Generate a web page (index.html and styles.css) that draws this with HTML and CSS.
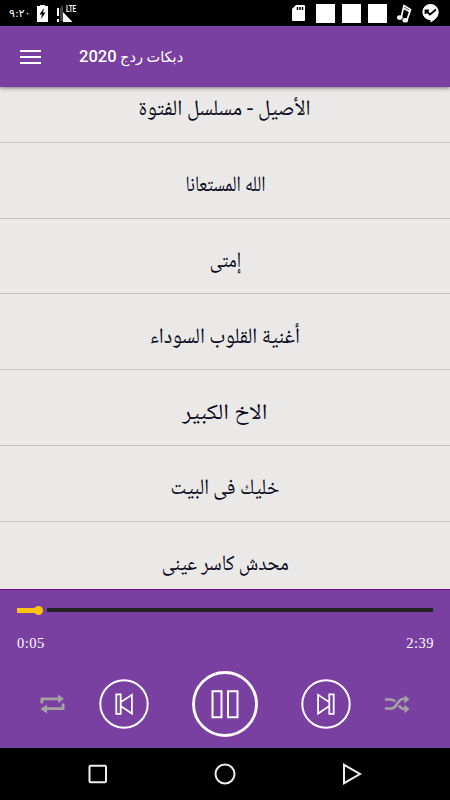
FILE: index.html
```html
<!DOCTYPE html>
<html lang="ar">
<head>
    <meta charset="UTF-8">
    <meta name="viewport" content="width=device-width, initial-scale=1.0">
    <title>دبكات ردج 2020</title>
    <link rel="stylesheet" href="styles.css">
</head>
<body>
    <div class="status-bar">
        <span class="clock" dir="ltr">٩:٢٠</span>
        <svg class="battery" width="11" height="17" viewBox="0 0 11 17"><path fill="#fff" d="M3 1V0h5v1h3v16H0V1z"/><path d="M7 3L2.500 9.500h2.500L4 14l4.500-6.500H6z"/></svg>
        <svg class="signal" width="20" height="18" viewBox="0 0 20 18"><path fill="#444" d="M3 3l3-3v16H3z"/><path fill="#fff" d="M6 7l9.500 10H6zM0 3h2v8H0zM0 14h2v3H0z"/></svg>
        <span class="lte">LTE</span>
        <div class="notifications">
            <svg width="13" height="16" viewBox="0 0 13 16"><path fill="#fff" d="M4 0h8q1 0 1 1v14q0 1-1 1H1q-1 0-1-1V4z"/><path stroke="#000" stroke-width="1.500" d="M5.500 2v3M8 2v3M10.500 2v3"/></svg>
            <i class="box"></i>
            <i class="box"></i>
            <i class="box"></i>
            <svg class="note" width="15" height="19" viewBox="0 0 15 19"><path fill="none" stroke="#fff" stroke-width="1.700" d="M4 14L7 1.500l6.500 4L10 16M6.500 4l6 3.500"/><ellipse cx="2.800" cy="13.500" rx="2.800" ry="2.300" fill="#fff"/><ellipse cx="8.300" cy="16.300" rx="2.800" ry="2.300" fill="#fff"/></svg>
            <svg class="check" width="17" height="19" viewBox="0 0 17 19"><path fill="#fff" d="M8.500 0a8.200 8 0 0 1 8.200 8.200c0 4-3.500 8-8.200 10.300v-2.300A8.100 8.100 0 0 1 8.500 0z"/><path fill="none" stroke="#000" stroke-width="1.800" d="M3.500 6.500l4.500 4 6-5M3.500 10V6.500h3.500"/></svg>
        </div>
    </div>

    <header>
        <button class="menu"><i></i><i></i><i></i></button>
        <h1 dir="rtl">دبكات ردج <b>2020</b></h1>
    </header>

    <ul class="songs" dir="rtl">
        <li><span>الأصيل - مسلسل الفتوة</span></li>
        <li><span>الله المستعانا</span></li>
        <li><span>إمتى</span></li>
        <li><span>أغنية القلوب السوداء</span></li>
        <li><span>الاخ الكبير</span></li>
        <li><span>خليك فى البيت</span></li>
        <li><span>محدش كاسر عينى</span></li>
    </ul>

    <section class="player">
        <div class="progress">
            <div class="played"></div>
            <div class="remaining"></div>
        </div>
        <div class="times"><span>0:05</span><span>2:39</span></div>
        <div class="controls">
            <svg class="repeat" width="25" height="20" viewBox="0 0 25 20"><g fill="none" stroke="#a5a2a0" stroke-width="2.800"><path d="M1.900 9.500V4.900H19M23.100 9.500v5.200H6"/></g><path fill="#a5a2a0" d="M18 .500L24 4.800 18 9zM7 10.500L.500 15 7 19.500z"/></svg>
            <svg class="prev" width="50" height="50" viewBox="0 0 50 50"><g fill="none" stroke="#fff" stroke-width="2"><circle cx="25" cy="25" r="23.700"/><path stroke-width="1.800" d="M17.300 15.300h4.400v7.900l11.200-7.400v18.700l-11.200-7.400v7.700h-4.400zM21.700 22v6"/></g></svg>
            <svg class="pause" width="66" height="66" viewBox="0 0 66 66"><g fill="none" stroke="#fff" stroke-width="2.800"><circle cx="33" cy="33" r="31.500"/><path stroke-width="2" d="M20.500 20.200h9v26h-9zM36 20.200h9.500v26H36z"/></g></svg>
            <svg class="next" width="50" height="50" viewBox="0 0 50 50"><g fill="none" stroke="#fff" stroke-width="2"><circle cx="25" cy="25" r="23.700"/><path stroke-width="1.800" d="M32.700 15.300h-4.400v7.900l-11.200-7.400v18.700l11.200-7.400v7.700h4.400zM28.300 22v6"/></g></svg>
            <svg class="shuffle" width="25" height="20" viewBox="0 0 25 20"><g fill="none" stroke="#a5a2a0" stroke-width="2.700"><path d="M0 14.500h6.500c6 0 5-9.500 12-9.500h2M0 5.500h6c2 0 3 .500 4 2M14 11.500c1.500 2.500 3 3.500 6.500 3.500"/></g><path fill="#a5a2a0" d="M19.500 1l5 4.200-5 4.300zM19.500 10.500l5 4.500-5 4.500z"/></svg>
        </div>
    </section>

    <nav class="system-nav">
        <svg width="20" height="20" viewBox="0 0 20 20"><rect x="1.500" y="1.800" width="16.500" height="16.500" rx="1"/></svg>
        <svg width="22" height="22" viewBox="0 0 22 22"><circle cx="11" cy="11" r="9.500"/></svg>
        <svg width="20" height="22" viewBox="0 0 20 22"><path d="M2 1.800v18.400L18 11z"/></svg>
    </nav>
</body>
</html>
```
FILE: styles.css
```css
body {
    margin: 0;
    height: 800px;
    display: flex;
    flex-direction: column;
    overflow: hidden;
    background: #eae9e7;
    font-family: Roboto, "DejaVu Sans", sans-serif;
}
.status-bar {
    height: 26px;
    flex: none;
    display: flex;
    align-items: center;
    background: #000;
    color: #fff;
    padding-left: 9px;
}
.clock { width: 28px; font: 11px "DejaVu Sans", sans-serif; white-space: nowrap; }
.battery { margin-top: 1px; }
.signal { margin-left: 9px; margin-top: 1px; }
.lte { margin: -9px 0 0 -11px; font-size: 9px; font-weight: bold; transform: scaleX(0.7); transform-origin: left; }
.notifications { display: flex; align-items: center; margin-left: auto; margin-right: 11px; }
.box { width: 19px; height: 19px; background: #fff; margin-left: 7px; }
.box:nth-child(2) { margin-left: 11px; }
.note { margin-left: 10px; }
.check { margin-left: 10px; }
header {
    height: 61px;
    flex: none;
    display: flex;
    align-items: center;
    background: #7940a2;
    color: #fff;
    position: relative;
    box-shadow: 0 1px 4px rgba(0, 0, 0, 0.5);
}
.menu {
    margin-left: 20px;
    width: 21px;
    padding: 0;
    border: none;
    background: none;
    display: grid;
    gap: 4px;
}
.menu i { height: 2px; background: #fff; }
h1 { margin: 0 0 0 38px; font-size: 14.500px; font-weight: normal; white-space: nowrap; }
h1 b { font-size: 16.500px; font-weight: 500; }
.songs {
    height: 502px;
    flex: none;
    margin: 0;
    padding: 0;
    overflow: hidden;
    list-style: none;
    color: #080820;
    font-family: "Noto Naskh Arabic", Amiri, "DejaVu Sans", serif;
    font-size: 20px;
}
.songs li {
    height: 75.800px;
    box-sizing: border-box;
    border-bottom: 1px solid #c5c4c3;
    display: flex;
    align-items: center;
    justify-content: center;
    padding-top: 14px;
}
.songs li:first-child { margin-top: -20px; }
.songs span { transform: scaleY(1.1); }
.songs li:nth-child(1) span { transform: scale(1.055, 1.1); }
.songs li:nth-child(2) span { transform: scale(0.9, 1.1); }
.songs li:nth-child(3) span { transform: scale(0.9, 1.1); }
.songs li:nth-child(4) span { transform: scale(1.03, 1.1); }
.songs li:nth-child(5) span { transform: scale(1.19, 1.1); }
.songs li:nth-child(7) span { transform: scale(0.96, 1.1); }
.player {
    height: 159px;
    flex: none;
    box-sizing: border-box;
    border-top: 1px solid #6a0f96;
    background: #7940a2;
    color: #fff;
    padding: 15px 17px 0;
}
.progress { height: 10px; display: flex; align-items: center; }
.played { width: 22px; height: 5px; margin-right: 8px; background: #ffc20e; position: relative; }
.played::after {
    content: "";
    position: absolute;
    right: -4px;
    top: -2px;
    width: 9px;
    height: 9px;
    border-radius: 50%;
    background: #ffc20e;
}
.remaining { flex: 1; height: 4px; background: #242424; }
.times {
    display: flex;
    justify-content: space-between;
    margin: 19px -1px 0 0;
    font: 14.500px/18px "Liberation Serif", serif;
    letter-spacing: 0.5px;
}
.controls { display: flex; align-items: center; height: 66px; padding-left: 23px; margin-top: 19px; }
.prev { margin-left: 34px; }
.pause { margin-left: 43px; }
.next { margin-left: 43px; }
.shuffle { margin-left: 34px; }
.system-nav { flex: 1; display: flex; align-items: center; background: #000; padding-left: 88px; }
.system-nav svg { fill: none; stroke: #eee; stroke-width: 2; }
.system-nav svg + svg { margin-left: 106px; }
```
